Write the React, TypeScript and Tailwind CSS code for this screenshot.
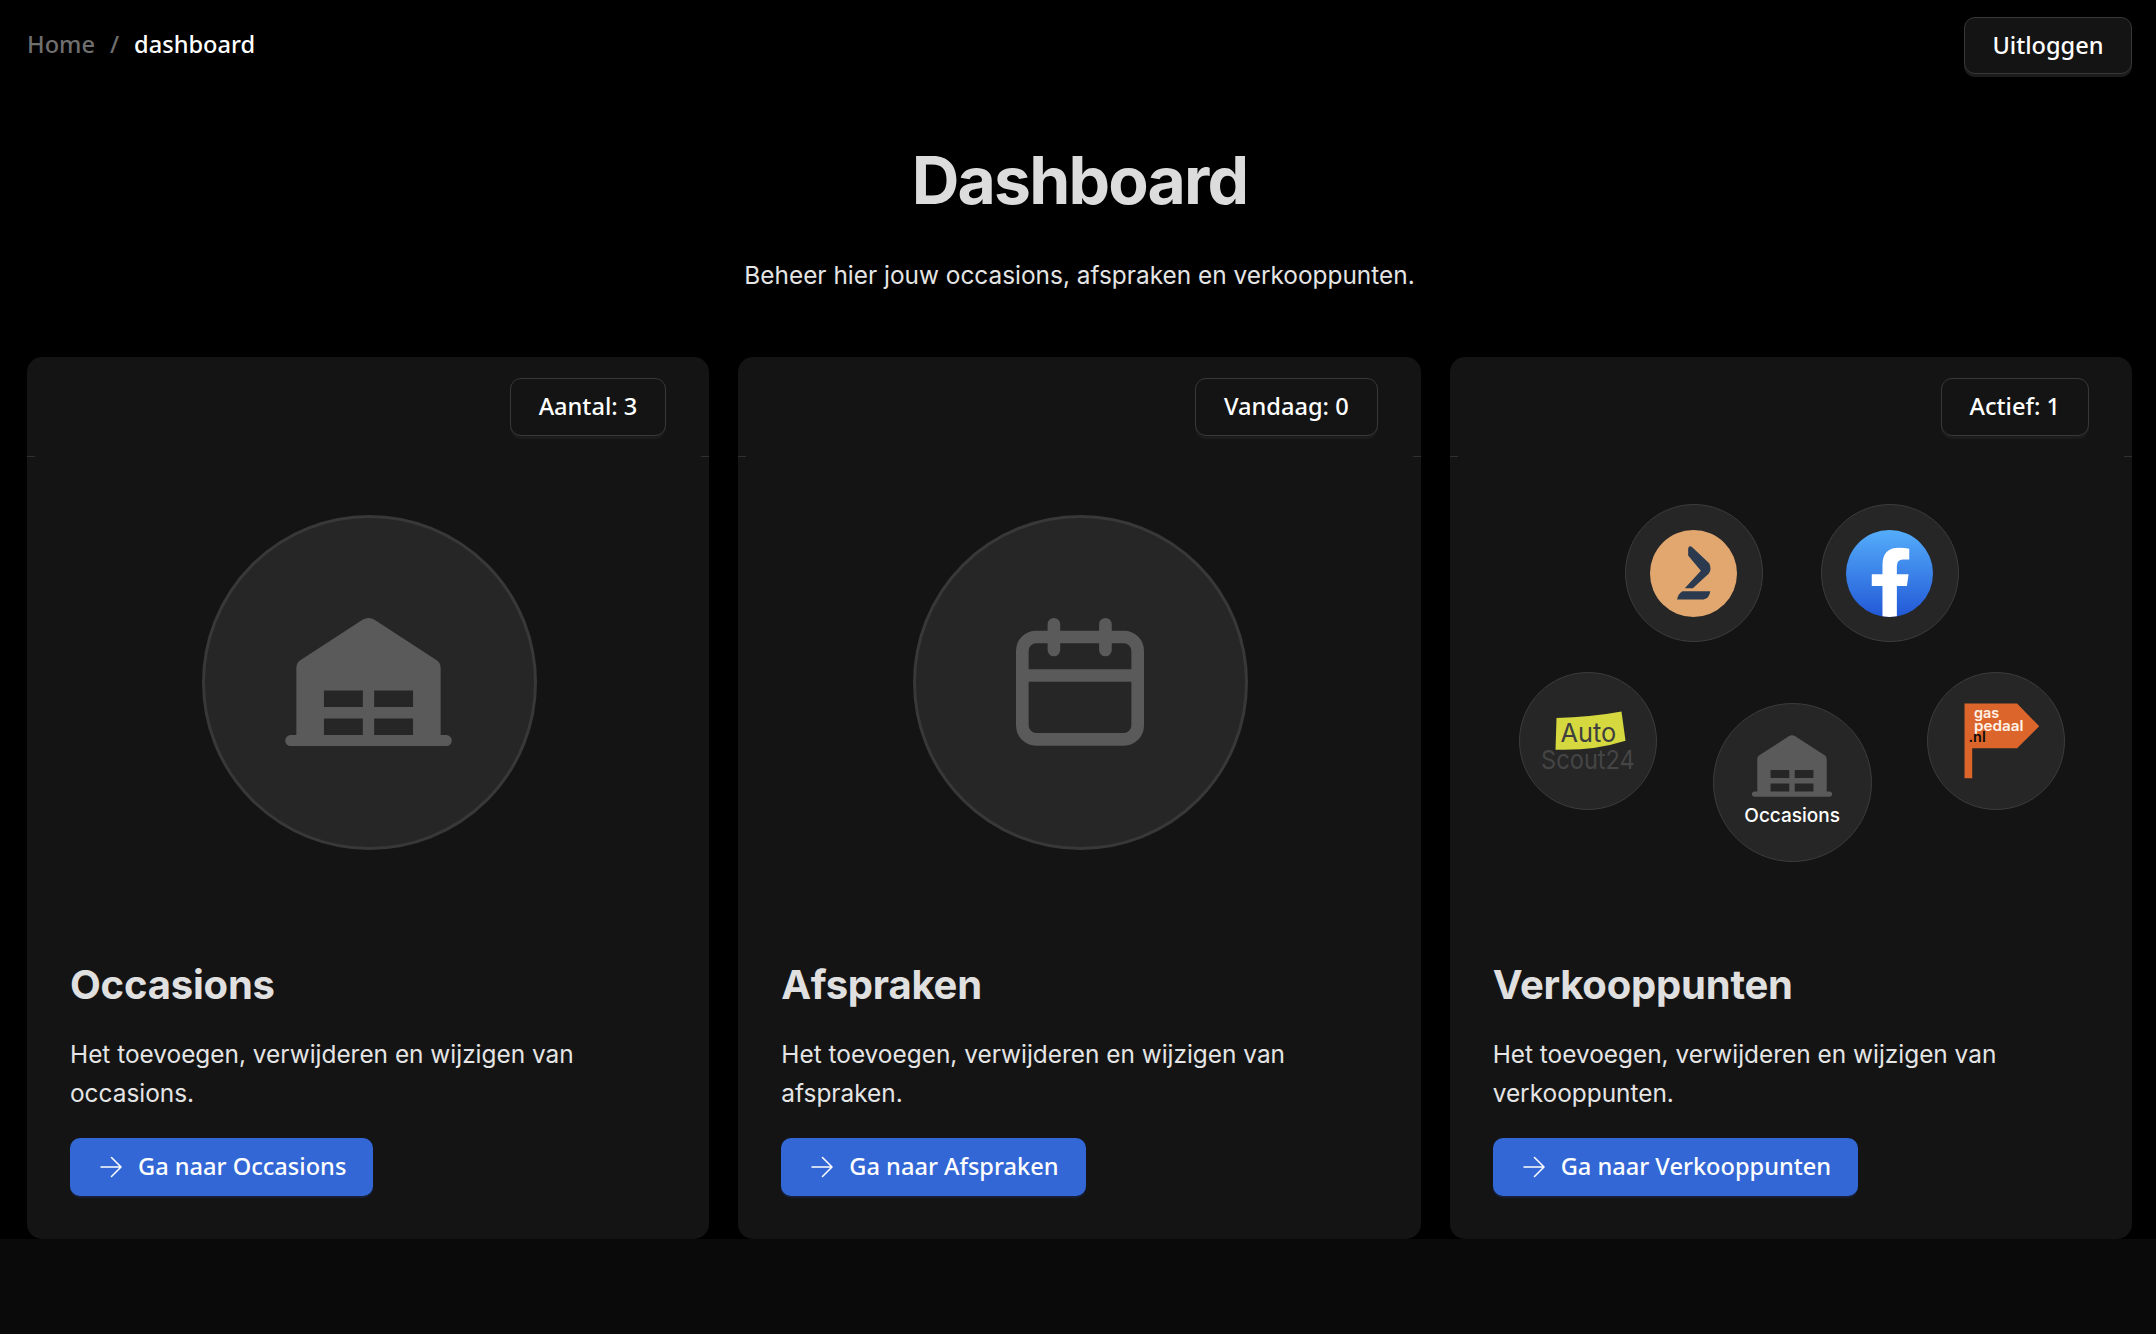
import React from "react";

const ui = "font-['Noto_Sans','Open_Sans',sans-serif] font-medium";

function Garage({ className }: { className: string }) {
  return (
    <svg viewBox="0 0 500 385" className={className} aria-hidden="true">
      <path
        fill="#5a5a5a"
        fillRule="evenodd"
        d="M33 352V150Q33 134 46 126L232 5Q250-5 268 5L454 126Q467 134 467 150V352H484A16.500 16.500 0 0 1 484 385H16A16.500 16.500 0 0 1 16 352ZM116 218V268H233V218ZM267 218V268H384V218ZM116 302V352H233V302ZM267 302V352H384V302Z"
      />
    </svg>
  );
}

function CalendarIcon() {
  return (
    <svg viewBox="0 0 385 385" className="w-[128px] h-[128px]" fill="none" stroke="#5a5a5a" strokeWidth="38" aria-hidden="true">
      <rect x="19" y="57" width="347" height="308" rx="42" />
      <path d="M19 173H366" />
      <path d="M114 19V96M269 19V96" strokeLinecap="round" />
    </svg>
  );
}

function BigCircle({ children }: { children: React.ReactNode }) {
  return (
    <div className="w-[335px] h-[335px] ml-[2px] rounded-full bg-[#262626] border-[3px] border-[#383838] flex items-center justify-center">
      {children}
    </div>
  );
}

function Node({ className, children }: { className: string; children: React.ReactNode }) {
  return (
    <div className={`absolute rounded-full bg-[#262626] border border-[#3c3c3c] flex flex-col items-center justify-center ${className}`}>
      {children}
    </div>
  );
}

function SalesVisual() {
  return (
    <div className="relative w-full h-full">
      <Node className="left-[175px] top-[47px] w-[138px] h-[138px]">
        <svg viewBox="0 0 260 260" className="w-[87px] h-[87px]" aria-hidden="true">
          <circle cx="130" cy="130" r="130" fill="#e2a76f" />
          <path fill="#2b3a4f" d="M114 56Q116 44 127 52L177 99Q185 116 176 130L128 174H104L152 122L114 76Z" />
          <path fill="#2b3a4f" d="M97 183H180Q178 204 160 208H81Q84 190 97 183Z" />
        </svg>
      </Node>
      <Node className="left-[371px] top-[47px] w-[138px] h-[138px]">
        <svg viewBox="0 0 260 260" className="w-[87px] h-[87px]" aria-hidden="true">
          <defs>
            <linearGradient id="fbg" x1="0" y1="0" x2="0" y2="1">
              <stop offset="0" stopColor="#54adfb" />
              <stop offset="1" stopColor="#2258d6" />
            </linearGradient>
            <clipPath id="fbc">
              <circle cx="130" cy="130" r="130" />
            </clipPath>
          </defs>
          <circle cx="130" cy="130" r="130" fill="url(#fbg)" />
          <path clipPath="url(#fbc)" fill="#fff" d="M109 262V167H77V132H109V105Q109 53 158 53Q175 53 189 56V88H170Q152 88 152 108V132H187L182 167H152V262Z" />
        </svg>
      </Node>
      <Node className="left-[69px] top-[215px] w-[138px] h-[138px]">
        <svg viewBox="0 0 412 412" className="absolute left-[-1px] top-[-1px] w-[138px] h-[138px]" aria-hidden="true">
          <path fill="#d5d83f" d="M112 137Q210 136 306 118L318 205Q220 236 109 232Z" />
          <text x="124" y="208" fontFamily="Inter, sans-serif" fontSize="78" fill="#3f3f3f" textLength="166" lengthAdjust="spacingAndGlyphs">Auto</text>
          <text x="66" y="291" fontFamily="Inter, sans-serif" fontSize="78" fill="#454545" textLength="280" lengthAdjust="spacingAndGlyphs">Scout24</text>
        </svg>
      </Node>
      <Node className="left-[263px] top-[246px] w-[159px] h-[159px] justify-start pt-[31px]">
        <Garage className="w-[80px] h-[62px]" />
        <span className="mt-[8px] text-[19px] leading-[22px] font-medium text-white font-['Inter',sans-serif]">Occasions</span>
      </Node>
      <Node className="left-[477px] top-[215px] w-[138px] h-[138px]">
        <svg viewBox="0 0 412 412" className="absolute left-[-1px] top-[-1px] w-[138px] h-[138px]" aria-hidden="true">
          <path fill="#dc652c" d="M112 94H269L335 162L269 228H135V317H112Z" />
          <text x="140" y="137" fontFamily="Inter, sans-serif" fontWeight="600" fontSize="43" fill="#fff3e8">gas</text>
          <text x="140" y="175" fontFamily="Inter, sans-serif" fontWeight="600" fontSize="43" fill="#fff3e8" textLength="148" lengthAdjust="spacingAndGlyphs">pedaal</text>
          <text x="124" y="210" fontFamily="Inter, sans-serif" fontWeight="600" fontSize="43" fill="#0a0a0a">.nl</text>
        </svg>
      </Node>
    </div>
  );
}

function Arrow() {
  return (
    <svg viewBox="0 0 22 22" className="w-[22px] h-[22px]" fill="none" stroke="#fff" strokeWidth="1.500" strokeLinecap="round" strokeLinejoin="round" aria-hidden="true">
      <path d="M1 11H20.500M11.500 1.500L21 11L11.500 20.500" />
    </svg>
  );
}

function Card({
  badge,
  title,
  text,
  cta,
  children,
}: {
  badge: string;
  title: string;
  text: string;
  cta: string;
  children: React.ReactNode;
}) {
  return (
    <section className="relative flex flex-col bg-[#141414] rounded-[15px]">
      <div className="relative h-[100px] pt-[21px] pr-[43px] flex justify-end items-start">
        <span className={`${ui} h-[58px] px-[28px] flex items-center text-[23.600px] text-white bg-[#141414] border border-[#383838] rounded-[11px] shadow-[0_3px_0_#1c1c1c]`}>
          {badge}
        </span>
        <span className="absolute left-0 bottom-0 w-[8px] h-px bg-[#303030]" />
        <span className="absolute right-0 bottom-0 w-[8px] h-px bg-[#303030]" />
      </div>
      <div className="h-[450px] flex items-center justify-center">{children}</div>
      <div className="px-[43px] pt-[54px] pb-[43px]">
        <h2 className="font-['Inter',sans-serif] text-[40px] leading-[48px] font-bold tracking-[-0.2px] text-[#e0e0e0]">{title}</h2>
        <p className="mt-[26px] font-['Inter',sans-serif] text-[24.400px] leading-[39px] text-[#e5e5e5]">{text}</p>
        <a className={`${ui} mt-[25px] inline-flex items-center gap-[16px] h-[58px] pl-[30px] pr-[27px] bg-[#3367d6] rounded-[10px] text-white text-[23.600px] shadow-[0_2px_1px_#182038]`}>
          <Arrow />
          {cta}
        </a>
      </div>
    </section>
  );
}

export default function App() {
  return (
    <div className="min-h-[1334px] bg-[#0a0a0a] flex flex-col">
      <main className="bg-black pl-[27px] pr-[24px]">
        <header className="flex items-start justify-between pt-[17px] h-[91px]">
          <nav className={`${ui} flex items-center gap-[15px] h-[57px] text-[23.600px] -mt-[1px]`}>
            <span className="text-[#6f6f6f]">Home</span>
            <span className="text-[#6f6f6f]">/</span>
            <span className="text-white">dashboard</span>
          </nav>
          <button className={`${ui} h-[57px] w-[168px] text-[23.600px] text-white bg-[#141414] border border-[#383838] rounded-[11px] shadow-[0_3px_0_#1c1c1c]`}>
            Uitloggen
          </button>
        </header>
        <div className="flex flex-col items-center">
          <h1 className="mt-[50px] font-['Inter',sans-serif] text-[66px] leading-[78px] font-bold text-[#dcdcdc] tracking-[-1.800px]">Dashboard</h1>
          <p className="mt-[38px] font-['Inter',sans-serif] text-[24.400px] leading-[36px] text-[#e5e5e5]">
            Beheer hier jouw occasions, afspraken en verkooppunten.
          </p>
        </div>
        <div className="mt-[64px] grid grid-cols-3 gap-[29px]">
          <Card badge="Aantal: 3" title="Occasions" text="Het toevoegen, verwijderen en wijzigen van occasions." cta="Ga naar Occasions">
            <BigCircle>
              <Garage className="w-[167px] h-[128px] -ml-[2px]" />
            </BigCircle>
          </Card>
          <Card badge="Vandaag: 0" title="Afspraken" text="Het toevoegen, verwijderen en wijzigen van afspraken." cta="Ga naar Afspraken">
            <BigCircle>
              <CalendarIcon />
            </BigCircle>
          </Card>
          <Card badge="Actief: 1" title="Verkooppunten" text="Het toevoegen, verwijderen en wijzigen van verkooppunten." cta="Ga naar Verkooppunten">
            <SalesVisual />
          </Card>
        </div>
      </main>
    </div>
  );
}
